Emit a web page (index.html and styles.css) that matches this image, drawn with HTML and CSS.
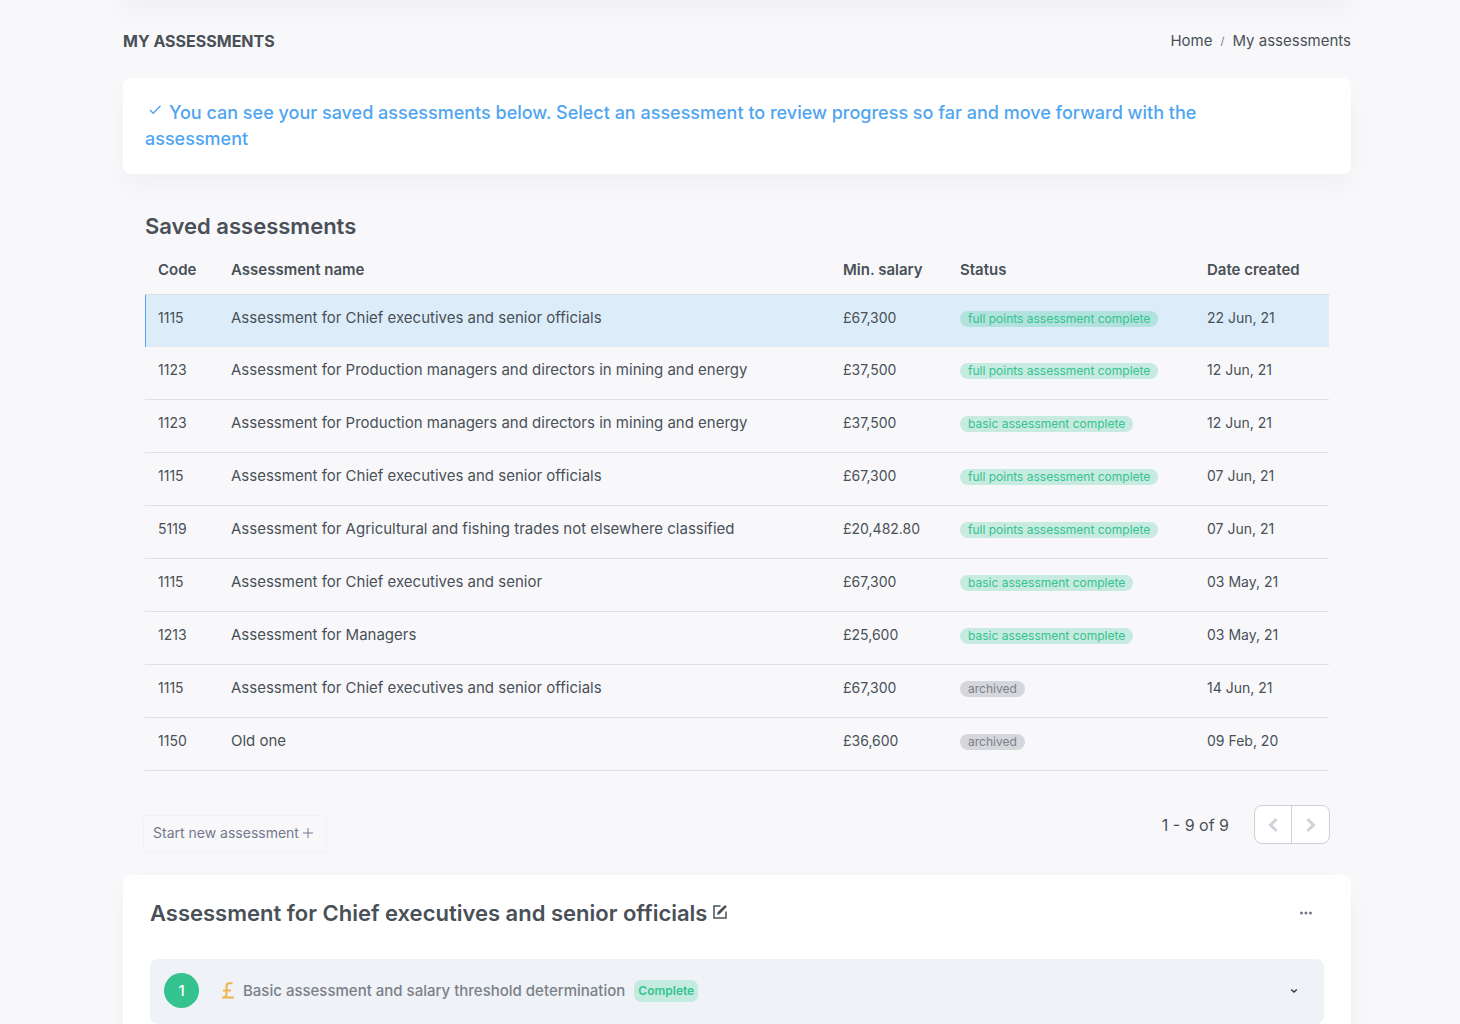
FILE: index.html
```html
<!DOCTYPE html>
<html lang="en">
<head>
<meta charset="utf-8">
<meta name="viewport" content="width=device-width, initial-scale=1">
<title>My assessments</title>
<link rel="stylesheet" href="styles.css">
</head>
<body>
<div class="page">
  <div class="topbar"></div>
  <header class="page-head">
    <h1 class="page-title">MY ASSESSMENTS</h1>
    <nav class="breadcrumb" aria-label="Breadcrumb">
      <a href="#home">Home</a>
      <span class="sep">/</span>
      <a href="#assessments">My assessments</a>
    </nav>
  </header>

  <main>
    <section class="card notice">
      <p><svg class="check" viewBox="0 2 20 16" aria-hidden="true"><path d="M5 11l3.200 3.200 7.300-7.400"/></svg>You can see your saved assessments below. Select an assessment to review progress so far and move forward with the assessment</p>
    </section>

    <section class="saved">
      <h2 class="heading">Saved assessments</h2>
      <table class="assessments">
        <colgroup>
          <col class="col-code"><col><col class="col-salary"><col class="col-status"><col class="col-date">
        </colgroup>
        <thead>
          <tr><th scope="col">Code</th><th scope="col">Assessment name</th><th scope="col">Min. salary</th><th scope="col">Status</th><th scope="col">Date created</th></tr>
        </thead>
        <tbody>
          <tr class="active"><td>1115</td><td class="name">Assessment for Chief executives and senior officials</td><td>£67,300</td><td><span class="badge">full points assessment complete</span></td><td>22 Jun, 21</td></tr>
          <tr><td>1123</td><td class="name">Assessment for Production managers and directors in mining and energy</td><td>£37,500</td><td><span class="badge">full points assessment complete</span></td><td>12 Jun, 21</td></tr>
          <tr><td>1123</td><td class="name">Assessment for Production managers and directors in mining and energy</td><td>£37,500</td><td><span class="badge">basic assessment complete</span></td><td>12 Jun, 21</td></tr>
          <tr><td>1115</td><td class="name">Assessment for Chief executives and senior officials</td><td>£67,300</td><td><span class="badge">full points assessment complete</span></td><td>07 Jun, 21</td></tr>
          <tr><td>5119</td><td class="name">Assessment for Agricultural and fishing trades not elsewhere classified</td><td>£20,482.80</td><td><span class="badge">full points assessment complete</span></td><td>07 Jun, 21</td></tr>
          <tr><td>1115</td><td class="name">Assessment for Chief executives and senior</td><td>£67,300</td><td><span class="badge">basic assessment complete</span></td><td>03 May, 21</td></tr>
          <tr><td>1213</td><td class="name">Assessment for Managers</td><td>£25,600</td><td><span class="badge">basic assessment complete</span></td><td>03 May, 21</td></tr>
          <tr><td>1115</td><td class="name">Assessment for Chief executives and senior officials</td><td>£67,300</td><td><span class="badge muted">archived</span></td><td>14 Jun, 21</td></tr>
          <tr><td>1150</td><td class="name">Old one</td><td>£36,600</td><td><span class="badge muted">archived</span></td><td>09 Feb, 20</td></tr>
        </tbody>
      </table>
    </section>

    <div class="table-foot">
      <button class="new-btn" type="button">Start new assessment<svg viewBox="0 0 12 12" aria-hidden="true"><path d="M6 1v10M1 6h10"/></svg></button>
      <div class="pager">
        <span class="range">1 - 9 of 9</span>
        <div class="pager-buttons">
          <button type="button" aria-label="Previous page" disabled><svg viewBox="0 0 14 16" aria-hidden="true"><path d="M10.500 2L4.500 8l6 6"/></svg></button>
          <button type="button" aria-label="Next page" disabled><svg viewBox="0 0 14 16" aria-hidden="true"><path d="M3.500 2l6 6-6 6"/></svg></button>
        </div>
      </div>
    </div>

    <section class="card detail">
      <div class="detail-head">
        <h2 class="heading">Assessment for Chief executives and senior officials</h2>
        <button class="icon-btn edit" type="button" aria-label="Edit name"><svg viewBox="0 0 16 16" aria-hidden="true"><path d="M8.500 2H2v12h12V7.500"/><path class="pen" d="M5 11l.7-2.900L13 1l1.800 1.800-7 7.200z"/></svg></button>
        <button class="icon-btn more" type="button" aria-label="More options"><svg viewBox="0 0 14 4" aria-hidden="true"><circle cx="2.500" cy="2" r="1.500"/><circle cx="7" cy="2" r="1.500"/><circle cx="11.500" cy="2" r="1.500"/></svg></button>
      </div>
      <button class="step" type="button" aria-expanded="false">
        <span class="step-num">1</span>
        <svg class="pound" viewBox="0 0 12 17" aria-hidden="true"><path d="M10.500 1.200H7.500Q4.500 1.200 4.500 4.500V11.500Q4.500 14.500 2.500 15.300M1 8.500h8M0 15.500h12"/></svg>
        <span class="step-title">Basic assessment and salary threshold determination</span>
        <span class="tag">Complete</span>
        <svg class="chevron" viewBox="0 0 8 6" aria-hidden="true"><path d="M1.200 1.500L4 4l2.800-2.500"/></svg>
      </button>
    </section>
  </main>
</div>
</body>
</html>
```
FILE: styles.css
```css
* { box-sizing: border-box; }

body {
  margin: 0;
  background: #f8f8fb;
  color: #495057;
  font: 400 15px/22px Inter, "Open Sans", sans-serif;
  overflow-x: hidden;
}

h1, h2, p { margin: 0; }
a { color: inherit; text-decoration: none; }
button { font: inherit; color: inherit; cursor: pointer; }
svg { fill: none; stroke: currentColor; }

.page { padding: 0 109px 0 123px; }

.topbar {
  height: 60px;
  margin-top: -60px;
  box-shadow: 0 12px 24px rgba(18, 38, 63, .03);
}

.page-head {
  display: flex;
  align-items: center;
  justify-content: space-between;
  padding: 30px 0 26px;
}
.page-title { font-size: 16px; line-height: 22px; font-weight: 700; }
.breadcrumb { display: flex; align-items: center; gap: 8px; }
.breadcrumb .sep { font-size: 11px; color: #74788d; }

.card {
  background: #fff;
  border-radius: 8px;
  box-shadow: 0 12px 24px rgba(18, 38, 63, .03);
}

.notice {
  padding: 22px 100px 22px 22px;
  color: #50a5f1;
  font-size: 18px;
  line-height: 26px;
  font-weight: 500;
}
.check {
  width: 20px;
  height: 16px;
  margin-right: 4px;
  vertical-align: 2px;
  stroke-width: 1.500;
}

.saved { padding: 38px 22px 0; }
.heading { font-size: 22px; line-height: 28px; font-weight: 600; }

.assessments {
  width: 100%;
  margin-top: 7px;
  table-layout: fixed;
  border-collapse: separate;
  border-spacing: 0;
  font-size: 14px;
}
.col-code { width: 73px; }
.col-salary { width: 117px; }
.col-status { width: 247px; }
.col-date { width: 135px; }
.assessments th, .assessments td {
  padding: 12px 0 18px 13px;
  text-align: left;
  vertical-align: top;
  border-bottom: 1px solid #dee0e4;
}
.assessments th { padding-bottom: 13px; font-size: 15px; font-weight: 600; }
.assessments .name { font-size: 15px; }
.assessments .active td { background: #dcedf9; border-bottom: 0; }
.assessments .active td:first-child { box-shadow: inset 1px 0 #50a5f1; }

.badge {
  display: inline-block;
  padding: 0 8px;
  border-radius: 8px;
  background: rgba(52, 195, 143, .25);
  color: #34c38f;
  font-size: 12px;
  line-height: 16px;
}
.badge.muted { background: #d5d7dc; color: #7b8088; }

.table-foot {
  display: flex;
  align-items: flex-end;
  justify-content: space-between;
  padding: 34px 21px 22px 20px;
}
.new-btn {
  display: flex;
  align-items: center;
  gap: 3px;
  padding: 6px 12px 8px 9px;
  border: 1px solid #eff2f7;
  border-radius: 4px;
  background: transparent;
  color: #74788d;
  font-size: 14px;
}
.new-btn svg { width: 12px; height: 12px; }

.pager { display: flex; align-items: center; gap: 25px; padding-bottom: 9px; }
.range { font-size: 16px; }
.pager-buttons {
  display: flex;
  border: 1px solid #ced0d8;
  border-radius: 8px;
  background: #fff;
}
.pager-buttons button {
  display: grid;
  place-items: center;
  width: 36px;
  height: 37px;
  padding: 0;
  border: 0;
  background: none;
  color: #d0d1d9;
}
.pager-buttons button + button { width: 38px; border-left: 1px solid #ced0d8; }
.pager-buttons svg { width: 14px; height: 16px; stroke-width: 3; }

.detail { padding: 24px 27px 40px; }
.detail-head { display: flex; align-items: center; gap: 5px; }
.icon-btn { display: flex; padding: 0; border: 0; background: none; }
.icon-btn svg { width: 16px; height: 16px; stroke-width: 1.500; }
.icon-btn .pen { fill: currentColor; stroke: none; }
.edit { padding-bottom: 3px; }
.more { margin-left: auto; padding-right: 11px; color: #74788d; }
.more svg { width: 14px; height: 4px; fill: currentColor; stroke: none; }

.step {
  display: flex;
  align-items: center;
  width: 100%;
  margin-top: 32px;
  padding: 14px 26px 16px 14px;
  border: 0;
  border-radius: 8px;
  background: #eff2f7;
  color: #7b8088;
  font-weight: 500;
}
.step-num {
  width: 35px;
  border-radius: 50%;
  background: #34c38f;
  color: #fff;
  line-height: 35px;
}
.pound { width: 12px; height: 17px; margin: 0 9px 0 23px; color: #f1b44c; stroke-width: 2; }
.tag {
  margin-left: 9px;
  padding: 0 4px;
  border-radius: 7px;
  background: #c4ebe0;
  color: #34c38f;
  font-size: 12px;
  font-weight: 600;
}
.chevron { width: 8px; height: 6px; margin-left: auto; color: #343a40; stroke-width: 1.500; }
```
